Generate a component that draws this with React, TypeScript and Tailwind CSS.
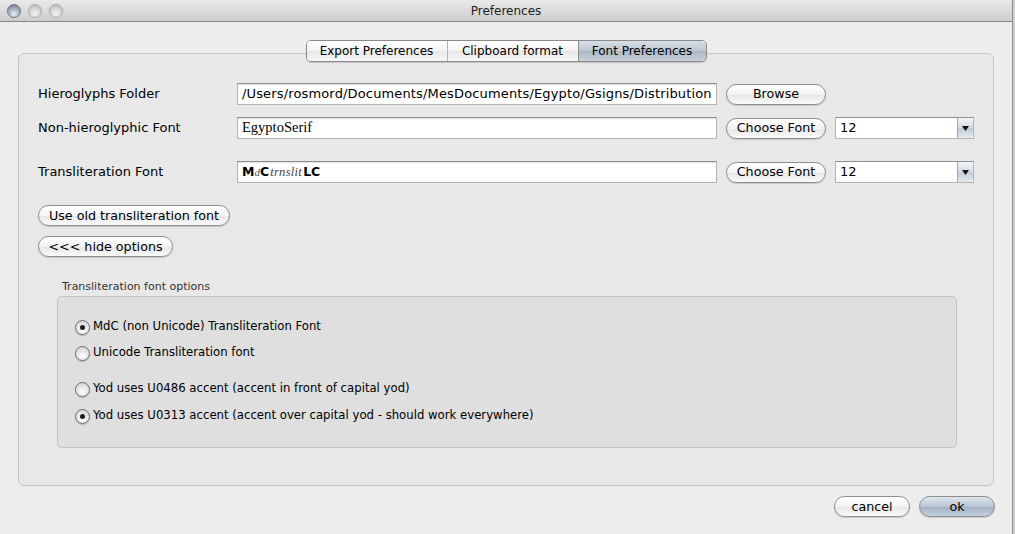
import React from 'react';

const ui = { fontFamily: "'DejaVu Sans', 'Liberation Sans', sans-serif" };

function AquaButton({ label, className = '', primary = false }: { label: string; className?: string; primary?: boolean }) {
  return (
    <div
      className={`flex h-[21px] items-center justify-center rounded-full border border-[#8d8d8d] text-[12.7px] text-black shadow-[0_1px_1px_rgba(0,0,0,0.15)] ${
        primary
          ? 'bg-[linear-gradient(#dfe6ee,#b9c5d3_50%,#9fb0c3_51%,#c3d0de)]'
          : 'bg-[linear-gradient(#ffffff,#f4f4f4_50%,#e6e6e6_51%,#fafafa)]'
      } ${className}`}
    >
      {label}
    </div>
  );
}

function TextField({ children, className = '' }: { children: React.ReactNode; className?: string }) {
  return (
    <div
      className={`flex h-[22px] w-[480px] items-center border border-[#b4b4b4] border-t-[#8e8e8e] bg-white pl-[4px] text-black shadow-[inset_0_1px_1px_rgba(0,0,0,0.12)] ${className}`}
    >
      {children}
    </div>
  );
}

function Combo() {
  return (
    <div className="ml-[9px] flex h-[22px] w-[139px] items-stretch border border-[#b4b4b4] border-t-[#8e8e8e] bg-white">
      <div className="flex flex-1 items-center pl-[4px] text-[13px]">12</div>
      <div className="flex w-[16px] items-center justify-center rounded-r-[4px] border-l border-[#9aa6b4] bg-[linear-gradient(#f2f5f8,#d3dbe4_50%,#c0cbd7_51%,#e4eaf0)]">
        <svg width="7" height="5" viewBox="0 0 7 5">
          <path d="M0 0 L7 0 L3.5 5 Z" fill="#111" />
        </svg>
      </div>
    </div>
  );
}

function Radio({ checked, label }: { checked: boolean; label: string }) {
  return (
    <div className="flex h-[20px] items-center">
      <div className="flex h-[15px] w-[15px] items-center justify-center rounded-full border border-[#6f6f6f] bg-[radial-gradient(circle_at_50%_70%,#ffffff,#dcdcdc_70%,#bdbdbd)] shadow-[0_1px_1px_rgba(0,0,0,0.2)]">
        {checked && <div className="h-[5px] w-[5px] rounded-full bg-[#1c1c1c]" />}
      </div>
      <span className="ml-[3px] text-[11.7px] text-black">{label}</span>
    </div>
  );
}

function Light({ dark }: { dark?: boolean }) {
  return (
    <div
      className={`h-[14px] w-[14px] rounded-full border ${
        dark
          ? 'border-[#6d7585] bg-[radial-gradient(circle_at_50%_75%,#e9eef5,#9aa3b2_60%,#6f7889)]'
          : 'border-[#a9a9a9] bg-[radial-gradient(circle_at_50%_75%,#f4f4f4,#cfcfcf_60%,#b2b2b2)]'
      }`}
    />
  );
}

export default function App() {
  return (
    <div className="flex h-[534px] w-[1015px] bg-[#cfcfcf]" style={ui}>
      <div className="flex h-full w-[1013px] flex-col border-r border-[#8c8c8c] bg-[#ededed]">
        {/* title bar */}
        <div className="relative flex h-[22px] shrink-0 items-center border-b border-[#888888] bg-[linear-gradient(#e9e9e9,#cdcdcd)]">
          <div className="flex gap-[7px] pl-[7px]">
            <Light dark />
            <Light />
            <Light />
          </div>
          <div className="absolute inset-0 flex items-center justify-center text-[12px] text-[#1e1e1e]">Preferences</div>
        </div>

        <div className="flex flex-1 flex-col px-[18px] pt-[18px]">
          {/* tabs */}
          <div className="relative z-10 flex h-[22px] justify-center">
            <div className="flex overflow-hidden rounded-[5px] border border-[#8a8a8a] text-[12px] shadow-[0_1px_1px_rgba(0,0,0,0.15)]">
              <div className="flex w-[140px] items-center justify-center bg-[linear-gradient(#ffffff,#f3f3f3_50%,#e7e7e7_51%,#f8f8f8)]">Export Preferences</div>
              <div className="flex w-[131px] items-center justify-center border-l border-[#b4b4b4] bg-[linear-gradient(#ffffff,#f3f3f3_50%,#e7e7e7_51%,#f8f8f8)]">Clipboard format</div>
              <div className="flex w-[128px] items-center justify-center border-l border-[#8a8a8a] bg-[linear-gradient(#d7dee7,#bcc6d2_50%,#abb7c5_51%,#c6d0db)]">Font Preferences</div>
            </div>
          </div>

          {/* panel */}
          <div className="-mt-[9px] flex h-[433px] flex-col rounded-[6px] border border-[#c6c6c6] bg-[#e8e8e8] pl-[19px] pt-[29px]">
            <div className="flex items-center">
              <div className="w-[199px] text-[13px]">Hieroglyphs Folder</div>
              <TextField className="text-[13px] tracking-[0.15px]">/Users/rosmord/Documents/MesDocuments/Egypto/Gsigns/Distribution</TextField>
              <AquaButton label="Browse" className="ml-[9px] w-[100px]" />
            </div>
            <div className="mt-[12px] flex items-center">
              <div className="w-[199px] text-[13px]">Non-hieroglyphic Font</div>
              <TextField className="font-['Liberation_Serif',serif] text-[14.5px]">EgyptoSerif</TextField>
              <AquaButton label="Choose Font" className="ml-[9px] w-[100px]" />
              <Combo />
            </div>
            <div className="mt-[22px] flex items-center">
              <div className="w-[199px] text-[13px]">Transliteration Font</div>
              <TextField className="text-[12.5px]">
                <span className="font-bold">M</span>
                <span className="font-['Liberation_Serif',serif] text-[11px] italic text-[#555]">d</span>
                <span className="font-bold">C</span>
                <span className="px-[1px] font-['Liberation_Serif',serif] text-[12.5px] italic tracking-[0.3px] text-[#444]">trnslit</span>
                <span className="font-bold">LC</span>
              </TextField>
              <AquaButton label="Choose Font" className="ml-[9px] w-[100px]" />
              <Combo />
            </div>

            <AquaButton label="Use old transliteration font" className="mt-[22px] w-[192px]" />
            <AquaButton label="<<< hide options" className="mt-[10px] w-[135px]" />

            <div className="ml-[24px] mt-[23px] h-[14px] text-[11px] leading-[14px] text-[#333]">Transliteration font options</div>
            <div className="ml-[19px] mt-[2px] flex h-[152px] w-[900px] flex-col rounded-[5px] border border-[#c2c2c2] bg-[#dfdfdf] pl-[17px] pt-[20px]">
              <Radio checked label="MdC (non Unicode) Transliteration Font" />
              <div className="mt-[6px]">
                <Radio checked={false} label="Unicode Transliteration font" />
              </div>
              <div className="mt-[16px]">
                <Radio checked={false} label="Yod uses U0486 accent (accent in front of capital yod)" />
              </div>
              <div className="mt-[7px]">
                <Radio checked label="Yod uses U0313 accent (accent over capital yod - should work everywhere)" />
              </div>
            </div>
          </div>

          {/* bottom buttons */}
          <div className="-mr-[1px] mt-[10px] flex justify-end gap-[9px]">
            <AquaButton label="cancel" className="w-[76px]" />
            <AquaButton label="ok" primary className="w-[76px]" />
          </div>
        </div>
      </div>
    </div>
  );
}
